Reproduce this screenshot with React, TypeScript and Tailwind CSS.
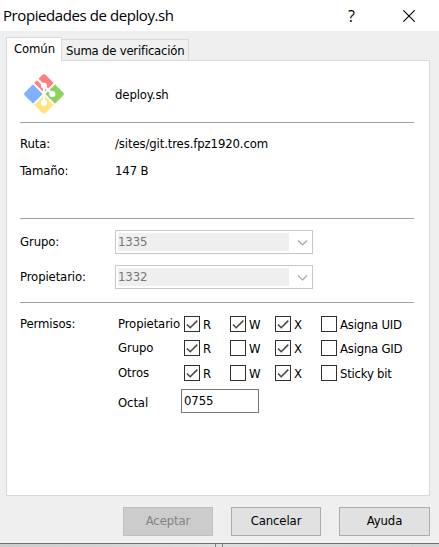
import type { ReactNode } from 'react';

function Check({ on, label, className }: { on?: boolean; label: string; className: string }) {
  return (
    <div className={`flex h-4 shrink-0 items-center whitespace-nowrap ${className}`}>
      <span className="h-4 w-4 shrink-0 border border-[#303030] bg-white">
        {on && (
          <svg width="14" height="14" viewBox="0 0 14 14" fill="none" className="block">
            <path d="M2 7.5 L5.2 10.7 L12.3 3.6" stroke="#444" strokeWidth="1.5" />
          </svg>
        )}
      </span>
      <span className="ml-[3px] pt-px leading-4">{label}</span>
    </div>
  );
}

function Combo({ label, value, className }: { label: string; value: string; className: string }) {
  return (
    <div className={`flex h-6 ${className}`}>
      <span className="w-[95px] pt-1 leading-4">{label}</span>
      <div className="flex h-6 w-[198px] border border-[#c8c8c8] bg-white p-[2px]">
        <span className="h-[18px] w-[171px] shrink-0 bg-[#efefef] text-[#777] leading-[17px]">{value}</span>
        <svg width="21" height="18" viewBox="0 0 21 18" fill="none">
          <path d="M9 7.5 L13.5 12 L18 7.5" stroke="#a8a8a8" strokeWidth="1.2" />
        </svg>
      </div>
    </div>
  );
}

function PermissionRow({ name, write, special, className }: { name: string; write?: boolean; special: string; className: string }) {
  return (
    <div className={`flex h-4 ${className}`}>
      <span className="w-[66px] shrink-0 whitespace-nowrap leading-4">{name}</span>
      <Check on label="R" className="w-[46px]" />
      <Check on={write} label="W" className="w-[45px]" />
      <Check on label="X" className="w-[46px]" />
      <Check label={special} className="w-[90px] tracking-[-0.22px]" />
    </div>
  );
}

function Button({ children, className }: { children: ReactNode; className: string }) {
  return <button className={`h-[29px] border pb-px text-center ${className}`}>{children}</button>;
}

function GitIcon() {
  return (
    <svg width="40" height="40" viewBox="0.7 0.7 38.6 38.6" fill="none">
      <path d="M10.5 9.5 L18 2 Q20 0 22 2 L30.5 10.5 L20 20 Z" fill="#ff8080" />
      <path d="M30.5 10.5 L38.5 18.5 Q40 20 38.5 21.5 L30 30 L20 20 Z" fill="#8bd35c" />
      <path d="M30 30 L22 38 Q20 40 18 38 L10 30 L20 20 Z" fill="#ffe582" />
      <path d="M10 30 L1.5 21.5 Q0 20 1.5 18.5 L9.5 10.5 L20 20 Z" fill="#80b0ff" />
      <path d="M9 9 L20 20 L9 31 M20 20 L31 9 M20 20 L31 31" stroke="white" strokeWidth="1.8" />
      <path d="M13 5 L20 12 V28 M20 12 L28 20" stroke="white" strokeWidth="2.2" />
      <circle cx="20" cy="12" r="2.9" fill="white" />
      <circle cx="28" cy="20" r="3" fill="white" />
      <circle cx="20" cy="28.5" r="3" fill="white" />
    </svg>
  );
}

export default function App() {
  return (
    <div className="flex h-[547px] w-[439px] flex-col overflow-hidden bg-[#efefef] font-['DejaVu_Sans_Condensed','DejaVu_Sans',sans-serif] text-[13px] tracking-[-0.12px] text-black [font-stretch:condensed]">
      <header className="flex h-[31px] shrink-0 items-center bg-white [font-stretch:normal]">
        <h1 className="w-[344px] whitespace-nowrap pl-[3px] font-['Open_Sans',sans-serif] text-[15px] leading-[31px] tracking-[-0.42px]">Propiedades de deploy.sh</h1>
        <span className="w-[59px] pl-[4px] font-['Open_Sans',sans-serif] text-[16px] leading-[30px]">?</span>
        <svg width="12" height="12" viewBox="0 0 12 12" stroke="black" strokeWidth="1.1">
          <path d="M0.3 0.3 L11.7 11.7 M11.7 0.3 L0.3 11.7" />
        </svg>
      </header>

      <nav className="z-10 flex h-[30px] shrink-0 items-end pl-[6px]">
        <div className="h-6 w-14 whitespace-nowrap border border-b-0 border-[#d9d9d9] bg-white pl-[7px] pt-[3px] leading-4">Común</div>
        <div className="h-[22px] w-[127px] whitespace-nowrap border border-l-0 border-[#d9d9d9] bg-[#f0f0f0] pl-1 pt-[3px] leading-4 tracking-[-0.22px]">Suma de verificación</div>
      </nav>

      <main className="-mt-px ml-[6px] h-[436px] w-[424px] shrink-0 border border-[#d9d9d9] bg-white pl-[13px]">
        <section className="flex h-[62px] w-[394px] border-b border-[#a0a0a0] pl-[4px] pt-[13px]">
          <GitIcon />
          <span className="ml-[51px] pt-[13px] leading-4">deploy.sh</span>
        </section>
        <section className="h-24 w-[394px] border-b border-[#a0a0a0] pt-[13px]">
          <div className="flex h-[27px] leading-4"><span className="w-[95px]">Ruta:</span><span>/sites/git.tres.fpz1920.com</span></div>
          <div className="flex leading-4"><span className="w-[95px]">Tamaño:</span><span>147 B</span></div>
        </section>
        <section className="h-[84px] w-[394px] border-b border-[#a0a0a0] pt-[11px]">
          <Combo label="Grupo:" value="1335" className="mb-[11px]" />
          <Combo label="Propietario:" value="1332" className="" />
        </section>
        <section className="flex pt-[13px]">
          <span className="w-[98px] shrink-0 leading-4">Permisos:</span>
          <div>
            <PermissionRow name="Propietario" write special="Asigna UID" className="mb-2" />
            <PermissionRow name="Grupo" special="Asigna GID" className="mb-[9px]" />
            <PermissionRow name="Otros" special="Sticky bit" className="mb-2" />
            <div className="flex">
              <span className="w-[63px] pt-[6px] leading-4">Octal</span>
              <div className="h-6 w-[78px] border border-[#777] pl-[2px] pt-[3px] leading-4">0755</div>
            </div>
          </div>
        </section>
      </main>

      <footer className="flex h-[47px] shrink-0 pl-[123px] pt-[11px]">
        <Button className="mr-[18px] w-[90px] border-[#bfbfbf] bg-[#ccc] text-[#838383]">Aceptar</Button>
        <Button className="mr-[18px] w-[90px] border-[#adadad] bg-[#e1e1e1]">Cancelar</Button>
        <Button className="w-[91px] border-[#adadad] bg-[#e1e1e1]">Ayuda</Button>
      </footer>
      <div className="flex h-[4px] shrink-0 border-t border-[#707070] bg-gradient-to-r from-[#ccc] via-[#dedede] to-[#d4d4d4]">
        <span className="ml-[22px] w-[193px] border-l border-[#c5d3df]" />
        <span className="w-[8px] border-x border-[#808080]" />
        <span className="w-[190px] border-r border-[#ccc]" />
      </div>
    </div>
  );
}
